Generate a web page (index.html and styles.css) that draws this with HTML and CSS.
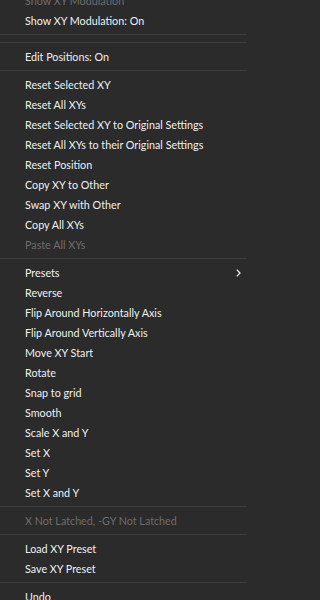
FILE: index.html
```html
<!DOCTYPE html>
<html>
<head>
<meta charset="utf-8">
<link rel="stylesheet" href="styles.css">
</head>
<body>
<div class="menu">
  <div class="item disabled">Show XY Modulation</div>
  <div class="item">Show XY Modulation: On</div>
  <div class="sep"></div>
  <div class="sep"></div>
  <div class="item">Edit Positions: On</div>
  <div class="sep"></div>
  <div class="item">Reset Selected XY</div>
  <div class="item">Reset All XYs</div>
  <div class="item">Reset Selected XY to Original Settings</div>
  <div class="item">Reset All XYs to their Original Settings</div>
  <div class="item">Reset Position</div>
  <div class="item">Copy XY to Other</div>
  <div class="item">Swap XY with Other</div>
  <div class="item">Copy All XYs</div>
  <div class="item disabled">Paste All XYs</div>
  <div class="sep"></div>
  <div class="item sub">Presets<svg class="chev" width="5" height="8" viewBox="0 0 5 8"><path d="M0.8 0.6 L4 4 L0.8 7.4" fill="none" stroke="#f0f0f0" stroke-width="1.3"/></svg></div>
  <div class="item">Reverse</div>
  <div class="item">Flip Around Horizontally Axis</div>
  <div class="item">Flip Around Vertically Axis</div>
  <div class="item">Move XY Start</div>
  <div class="item">Rotate</div>
  <div class="item">Snap to grid</div>
  <div class="item">Smooth</div>
  <div class="item">Scale X and Y</div>
  <div class="item">Set X</div>
  <div class="item">Set Y</div>
  <div class="item">Set X and Y</div>
  <div class="sep"></div>
  <div class="item disabled">X Not Latched, -GY Not Latched</div>
  <div class="sep"></div>
  <div class="item">Load XY Preset</div>
  <div class="item">Save XY Preset</div>
  <div class="sep"></div>
  <div class="item">Undo</div>
</div>
</body>
</html>
```

FILE: styles.css
```css
html, body {
  margin: 0;
  padding: 0;
  background: #2b2b2b;
  overflow: hidden;
}
.menu {
  margin-top: -9px;
  width: 247px;
  display: flex;
  flex-direction: column;
  font-family: "Lato", "Open Sans", sans-serif;
  font-size: 10.75px;
  color: #f0f0f0;
  background: #2b2b2b;
}
.item {
  height: 20px;
  line-height: 20px;
  padding-left: 25px;
  padding-right: 6px;
  white-space: nowrap;
  display: flex;
  align-items: center;
  justify-content: space-between;
}
.item.disabled {
  color: #6d6d6d;
}
.sep {
  height: 8px;
  box-sizing: border-box;
  padding-top: 3px;
}
.sep::before {
  content: "";
  display: block;
  height: 1px;
  background: #3d3d3d;
}
.chev {
  display: block;
}
```
